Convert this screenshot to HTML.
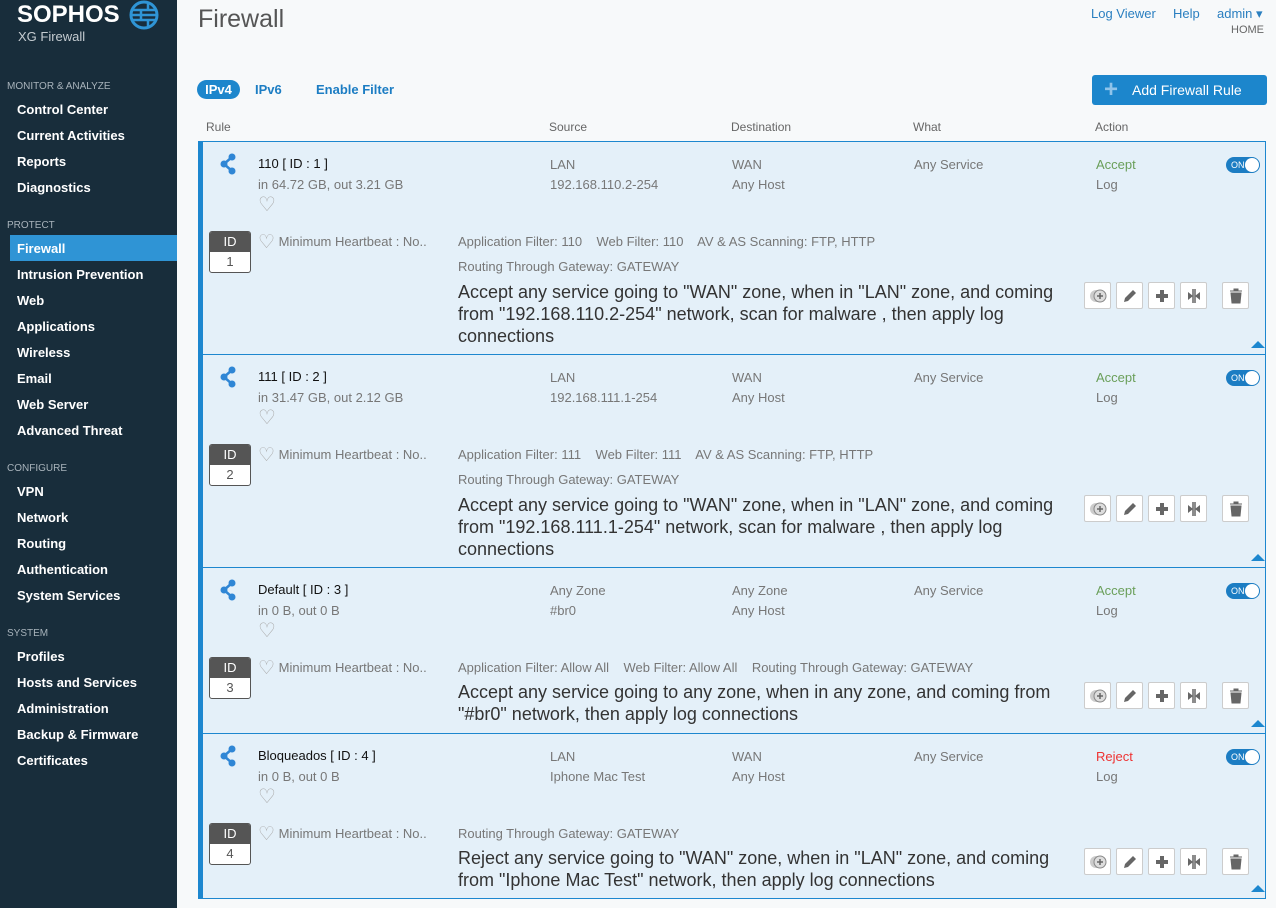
<!DOCTYPE html>
<html><head><meta charset="utf-8"><style>
*{box-sizing:border-box;margin:0;padding:0}
body{width:1276px;height:908px;overflow:hidden;font-family:"Liberation Sans",sans-serif;background:#f7f9fa;position:relative;color:#333}
#sb{position:absolute;left:0;top:0;width:177px;height:908px;background:#182d3b}
.logo{position:absolute;left:17px;top:1px;color:#fff;font-weight:bold;font-size:24px;letter-spacing:0}
.sub{position:absolute;left:18px;top:29px;color:#c5ccd1;font-size:13px}
.sec{position:absolute;left:7px;color:#a8b3bb;font-size:10px}
.it{position:absolute;left:17px;color:#fff;font-size:13px;font-weight:bold}
.act{position:absolute;left:10px;width:167px;height:26px;background:#2f94d5}
.t{position:absolute;white-space:nowrap}
.hd{font-size:12px;color:#666;top:120px}
.card{position:absolute;left:198px;width:1068px;background:#e4f0f9;border:1px solid #1d87cf;border-left:5px solid #1d87cf}
.card .t{font-size:13px;color:#777}
.ttl{color:#111!important}
.idb{position:absolute;left:6px;top:89px;width:42px;height:42px;border:1px solid #555;border-radius:3px;background:#fff;overflow:hidden}
.idb div{height:20px;background:#555;color:#fff;font-size:13px;text-align:center;line-height:20px}
.idb span{display:block;text-align:center;font-size:13px;color:#555;line-height:20px}
.desc{font-size:18px!important;color:#333!important;line-height:22px;white-space:normal!important;width:620px}
.btn{position:absolute;width:27px;height:27px;border:1px solid #ccc;border-radius:2px;background:#fff}
.btn svg{position:absolute;left:4px;top:4px}
.tg{position:absolute;width:34px;height:16px;border-radius:8px;background:#1c7dc3}
.tg::after{content:"";position:absolute;right:1px;top:1px;width:14px;height:14px;border-radius:7px;background:#fff}
.tg b{position:absolute;left:5px;top:3px;color:#fff;font-size:9px;line-height:10px;font-weight:normal}
.tri{position:absolute;right:0;bottom:6px;width:0;height:0;border-left:7px solid transparent;border-right:7px solid transparent;border-bottom:7px solid #1d87cf}
.acc{color:#6a9f5a!important}
</style></head><body>
<div id="sb">
<div class="logo">SOPHOS</div>
<svg style="position:absolute;left:129px;top:0" width="30" height="30" viewBox="0 0 30 30"><circle cx="15" cy="15" r="13" fill="none" stroke="#2f94d5" stroke-width="3"/><path d="M3 10h24M3 20h24M12 10v10M19 4v6M19 20v6" stroke="#2f94d5" stroke-width="2.5" fill="none"/><path d="M3 15h24" stroke="#2f94d5" stroke-width="2.5"/></svg>
<div class="sub">XG Firewall</div>
<div class="sec" style="top:81px">MONITOR &amp; ANALYZE</div>
<div class="it" style="top:102px">Control Center</div>
<div class="it" style="top:128px">Current Activities</div>
<div class="it" style="top:154px">Reports</div>
<div class="it" style="top:180px">Diagnostics</div>
<div class="sec" style="top:220px">PROTECT</div>
<div class="act" style="top:235px"></div>
<div class="it" style="top:241px">Firewall</div>
<div class="it" style="top:267px">Intrusion Prevention</div>
<div class="it" style="top:293px">Web</div>
<div class="it" style="top:319px">Applications</div>
<div class="it" style="top:345px">Wireless</div>
<div class="it" style="top:371px">Email</div>
<div class="it" style="top:397px">Web Server</div>
<div class="it" style="top:423px">Advanced Threat</div>
<div class="sec" style="top:463px">CONFIGURE</div>
<div class="it" style="top:484px">VPN</div>
<div class="it" style="top:510px">Network</div>
<div class="it" style="top:536px">Routing</div>
<div class="it" style="top:562px">Authentication</div>
<div class="it" style="top:588px">System Services</div>
<div class="sec" style="top:628px">SYSTEM</div>
<div class="it" style="top:649px">Profiles</div>
<div class="it" style="top:675px">Hosts and Services</div>
<div class="it" style="top:701px">Administration</div>
<div class="it" style="top:727px">Backup &amp; Firmware</div>
<div class="it" style="top:753px">Certificates</div>
</div>

<div class="t" style="left:198px;top:5px;font-size:25px;color:#555">Firewall</div>
<div class="t" style="left:1091px;top:6px;font-size:13px;color:#2a7fc0">Log Viewer</div>
<div class="t" style="left:1173px;top:6px;font-size:13px;color:#2a7fc0">Help</div>
<div class="t" style="left:1217px;top:6px;font-size:13px;color:#2a7fc0">admin ▾</div>
<div class="t" style="left:1231px;top:24px;font-size:11px;color:#666">HOME</div>
<div class="t" style="left:197px;top:80px;width:43px;height:19px;border-radius:10px;background:#1c86cc;color:#fff;font-size:13px;font-weight:bold;text-align:center;line-height:19px">IPv4</div>
<div class="t" style="left:255px;top:82px;font-size:13px;color:#1c7dc3;font-weight:bold">IPv6</div>
<div class="t" style="left:316px;top:82px;font-size:13px;color:#1c7dc3;font-weight:bold">Enable Filter</div>
<div class="t" style="left:1092px;top:75px;width:175px;height:30px;border-radius:3px;background:#1c86cc;color:#fff;font-size:14px;line-height:30px;padding-left:40px">Add Firewall Rule<span style="position:absolute;left:12px;top:0;font-size:24px;font-weight:bold;color:#8fc4ea">+</span></div>
<div class="t hd" style="left:206px">Rule</div>
<div class="t hd" style="left:549px">Source</div>
<div class="t hd" style="left:731px">Destination</div>
<div class="t hd" style="left:913px">What</div>
<div class="t hd" style="left:1095px">Action</div>

<div class="card" style="top:141px;height:214px">
<svg class="t" style="left:17px;top:11px" width="18" height="22" viewBox="0 0 18 22"><circle cx="12" cy="4" r="3.5" fill="#2f86d5"/><circle cx="4" cy="11" r="3.5" fill="#2f86d5"/><circle cx="12" cy="18" r="3.5" fill="#2f86d5"/><path d="M12 4L4 11L12 18" stroke="#2f86d5" stroke-width="2.5" fill="none"/></svg>
<div class="t ttl" style="left:55px;top:14px">110 [ ID : 1 ]</div>
<div class="t" style="left:55px;top:35px">in 64.72 GB, out 3.21 GB</div>
<div class="t" style="left:55px;top:50px;font-size:20px;color:#aaa">♡</div>
<div class="idb"><div>ID</div><span>1</span></div>
<div class="t" style="left:55px;top:89px"><span style="font-size:19px;color:#aaa;vertical-align:-2px">♡</span> Minimum Heartbeat : No..</div>
<div class="t" style="left:255px;top:92px">Application Filter: 110 &nbsp;&nbsp; Web Filter: 110 &nbsp;&nbsp; AV &amp; AS Scanning: FTP, HTTP</div>
<div class="t" style="left:255px;top:117px">Routing Through Gateway: GATEWAY</div>
<div class="t desc" style="left:255px;top:139px">Accept any service going to "WAN" zone, when in "LAN" zone, and coming from "192.168.110.2-254" network, scan for malware , then apply log connections</div>
<div class="t" style="left:347px;top:15px">LAN</div><div class="t" style="left:347px;top:35px">192.168.110.2-254</div>
<div class="t" style="left:529px;top:15px">WAN</div><div class="t" style="left:529px;top:35px">Any Host</div>
<div class="t" style="left:711px;top:15px">Any Service</div>
<div class="t acc" style="left:893px;top:15px">Accept</div><div class="t" style="left:893px;top:35px">Log</div>
<div class="tg" style="left:1023px;top:15px"><b>ON</b></div>
<div class="btn" style="left:881px;top:140px"><svg width="18" height="18"><circle cx="7" cy="9" r="6" fill="#ccc"/><circle cx="11" cy="9" r="6" fill="#ddd" stroke="#888"/><path d="M11 6v6M8 9h6" stroke="#666" stroke-width="1.5"/></svg></div>
<div class="btn" style="left:913px;top:140px"><svg width="18" height="18"><path d="M3 15l1-4 8-8 3 3-8 8z" fill="#666"/></svg></div>
<div class="btn" style="left:945px;top:140px"><svg width="18" height="18"><path d="M9 3v12M3 9h12" stroke="#666" stroke-width="4"/></svg></div>
<div class="btn" style="left:977px;top:140px"><svg width="18" height="18"><path d="M8 2v14M10 2v14" stroke="#666" stroke-width="1.5"/><path d="M8 9L3 5v8zM10 9l5-4v8z" fill="#666"/></svg></div>
<div class="btn" style="left:1019px;top:140px"><svg width="18" height="18"><path d="M3 4h12M7 4V2h4v2M4 6h10l-1 10H5z" fill="#666" stroke="#666"/></svg></div>
<div class="tri"></div>
</div>

<div class="card" style="top:354px;height:214px">
<svg class="t" style="left:17px;top:11px" width="18" height="22" viewBox="0 0 18 22"><circle cx="12" cy="4" r="3.5" fill="#2f86d5"/><circle cx="4" cy="11" r="3.5" fill="#2f86d5"/><circle cx="12" cy="18" r="3.5" fill="#2f86d5"/><path d="M12 4L4 11L12 18" stroke="#2f86d5" stroke-width="2.5" fill="none"/></svg>
<div class="t ttl" style="left:55px;top:14px">111 [ ID : 2 ]</div>
<div class="t" style="left:55px;top:35px">in 31.47 GB, out 2.12 GB</div>
<div class="t" style="left:55px;top:50px;font-size:20px;color:#aaa">♡</div>
<div class="idb"><div>ID</div><span>2</span></div>
<div class="t" style="left:55px;top:89px"><span style="font-size:19px;color:#aaa;vertical-align:-2px">♡</span> Minimum Heartbeat : No..</div>
<div class="t" style="left:255px;top:92px">Application Filter: 111 &nbsp;&nbsp; Web Filter: 111 &nbsp;&nbsp; AV &amp; AS Scanning: FTP, HTTP</div>
<div class="t" style="left:255px;top:117px">Routing Through Gateway: GATEWAY</div>
<div class="t desc" style="left:255px;top:139px">Accept any service going to "WAN" zone, when in "LAN" zone, and coming from "192.168.111.1-254" network, scan for malware , then apply log connections</div>
<div class="t" style="left:347px;top:15px">LAN</div><div class="t" style="left:347px;top:35px">192.168.111.1-254</div>
<div class="t" style="left:529px;top:15px">WAN</div><div class="t" style="left:529px;top:35px">Any Host</div>
<div class="t" style="left:711px;top:15px">Any Service</div>
<div class="t acc" style="left:893px;top:15px">Accept</div><div class="t" style="left:893px;top:35px">Log</div>
<div class="tg" style="left:1023px;top:15px"><b>ON</b></div>
<div class="btn" style="left:881px;top:140px"><svg width="18" height="18"><circle cx="7" cy="9" r="6" fill="#ccc"/><circle cx="11" cy="9" r="6" fill="#ddd" stroke="#888"/><path d="M11 6v6M8 9h6" stroke="#666" stroke-width="1.5"/></svg></div>
<div class="btn" style="left:913px;top:140px"><svg width="18" height="18"><path d="M3 15l1-4 8-8 3 3-8 8z" fill="#666"/></svg></div>
<div class="btn" style="left:945px;top:140px"><svg width="18" height="18"><path d="M9 3v12M3 9h12" stroke="#666" stroke-width="4"/></svg></div>
<div class="btn" style="left:977px;top:140px"><svg width="18" height="18"><path d="M8 2v14M10 2v14" stroke="#666" stroke-width="1.5"/><path d="M8 9L3 5v8zM10 9l5-4v8z" fill="#666"/></svg></div>
<div class="btn" style="left:1019px;top:140px"><svg width="18" height="18"><path d="M3 4h12M7 4V2h4v2M4 6h10l-1 10H5z" fill="#666" stroke="#666"/></svg></div>
<div class="tri"></div>
</div>

<div class="card" style="top:567px;height:167px">
<svg class="t" style="left:17px;top:11px" width="18" height="22" viewBox="0 0 18 22"><circle cx="12" cy="4" r="3.5" fill="#2f86d5"/><circle cx="4" cy="11" r="3.5" fill="#2f86d5"/><circle cx="12" cy="18" r="3.5" fill="#2f86d5"/><path d="M12 4L4 11L12 18" stroke="#2f86d5" stroke-width="2.5" fill="none"/></svg>
<div class="t ttl" style="left:55px;top:14px">Default [ ID : 3 ]</div>
<div class="t" style="left:55px;top:35px">in 0 B, out 0 B</div>
<div class="t" style="left:55px;top:50px;font-size:20px;color:#aaa">♡</div>
<div class="idb"><div>ID</div><span>3</span></div>
<div class="t" style="left:55px;top:89px"><span style="font-size:19px;color:#aaa;vertical-align:-2px">♡</span> Minimum Heartbeat : No..</div>
<div class="t" style="left:255px;top:92px">Application Filter: Allow All &nbsp;&nbsp; Web Filter: Allow All &nbsp;&nbsp; Routing Through Gateway: GATEWAY</div>
<div class="t desc" style="left:255px;top:113px">Accept any service going to any zone, when in any zone, and coming from "#br0" network, then apply log connections</div>
<div class="t" style="left:347px;top:15px">Any Zone</div><div class="t" style="left:347px;top:35px">#br0</div>
<div class="t" style="left:529px;top:15px">Any Zone</div><div class="t" style="left:529px;top:35px">Any Host</div>
<div class="t" style="left:711px;top:15px">Any Service</div>
<div class="t acc" style="left:893px;top:15px">Accept</div><div class="t" style="left:893px;top:35px">Log</div>
<div class="tg" style="left:1023px;top:15px"><b>ON</b></div>
<div class="btn" style="left:881px;top:114px"><svg width="18" height="18"><circle cx="7" cy="9" r="6" fill="#ccc"/><circle cx="11" cy="9" r="6" fill="#ddd" stroke="#888"/><path d="M11 6v6M8 9h6" stroke="#666" stroke-width="1.5"/></svg></div>
<div class="btn" style="left:913px;top:114px"><svg width="18" height="18"><path d="M3 15l1-4 8-8 3 3-8 8z" fill="#666"/></svg></div>
<div class="btn" style="left:945px;top:114px"><svg width="18" height="18"><path d="M9 3v12M3 9h12" stroke="#666" stroke-width="4"/></svg></div>
<div class="btn" style="left:977px;top:114px"><svg width="18" height="18"><path d="M8 2v14M10 2v14" stroke="#666" stroke-width="1.5"/><path d="M8 9L3 5v8zM10 9l5-4v8z" fill="#666"/></svg></div>
<div class="btn" style="left:1019px;top:114px"><svg width="18" height="18"><path d="M3 4h12M7 4V2h4v2M4 6h10l-1 10H5z" fill="#666" stroke="#666"/></svg></div>
<div class="tri"></div>
</div>

<div class="card" style="top:733px;height:166px">
<svg class="t" style="left:17px;top:11px" width="18" height="22" viewBox="0 0 18 22"><circle cx="12" cy="4" r="3.5" fill="#2f86d5"/><circle cx="4" cy="11" r="3.5" fill="#2f86d5"/><circle cx="12" cy="18" r="3.5" fill="#2f86d5"/><path d="M12 4L4 11L12 18" stroke="#2f86d5" stroke-width="2.5" fill="none"/></svg>
<div class="t ttl" style="left:55px;top:14px">Bloqueados [ ID : 4 ]</div>
<div class="t" style="left:55px;top:35px">in 0 B, out 0 B</div>
<div class="t" style="left:55px;top:50px;font-size:20px;color:#aaa">♡</div>
<div class="idb"><div>ID</div><span>4</span></div>
<div class="t" style="left:55px;top:89px"><span style="font-size:19px;color:#aaa;vertical-align:-2px">♡</span> Minimum Heartbeat : No..</div>
<div class="t" style="left:255px;top:92px">Routing Through Gateway: GATEWAY</div>
<div class="t desc" style="left:255px;top:113px">Reject any service going to "WAN" zone, when in "LAN" zone, and coming from "Iphone Mac Test" network, then apply log connections</div>
<div class="t" style="left:347px;top:15px">LAN</div><div class="t" style="left:347px;top:35px">Iphone Mac Test</div>
<div class="t" style="left:529px;top:15px">WAN</div><div class="t" style="left:529px;top:35px">Any Host</div>
<div class="t" style="left:711px;top:15px">Any Service</div>
<div class="t" style="left:893px;top:15px;color:#e33">Reject</div><div class="t" style="left:893px;top:35px">Log</div>
<div class="tg" style="left:1023px;top:15px"><b>ON</b></div>
<div class="btn" style="left:881px;top:114px"><svg width="18" height="18"><circle cx="7" cy="9" r="6" fill="#ccc"/><circle cx="11" cy="9" r="6" fill="#ddd" stroke="#888"/><path d="M11 6v6M8 9h6" stroke="#666" stroke-width="1.5"/></svg></div>
<div class="btn" style="left:913px;top:114px"><svg width="18" height="18"><path d="M3 15l1-4 8-8 3 3-8 8z" fill="#666"/></svg></div>
<div class="btn" style="left:945px;top:114px"><svg width="18" height="18"><path d="M9 3v12M3 9h12" stroke="#666" stroke-width="4"/></svg></div>
<div class="btn" style="left:977px;top:114px"><svg width="18" height="18"><path d="M8 2v14M10 2v14" stroke="#666" stroke-width="1.5"/><path d="M8 9L3 5v8zM10 9l5-4v8z" fill="#666"/></svg></div>
<div class="btn" style="left:1019px;top:114px"><svg width="18" height="18"><path d="M3 4h12M7 4V2h4v2M4 6h10l-1 10H5z" fill="#666" stroke="#666"/></svg></div>
<div class="tri"></div>
</div>
</body></html>
